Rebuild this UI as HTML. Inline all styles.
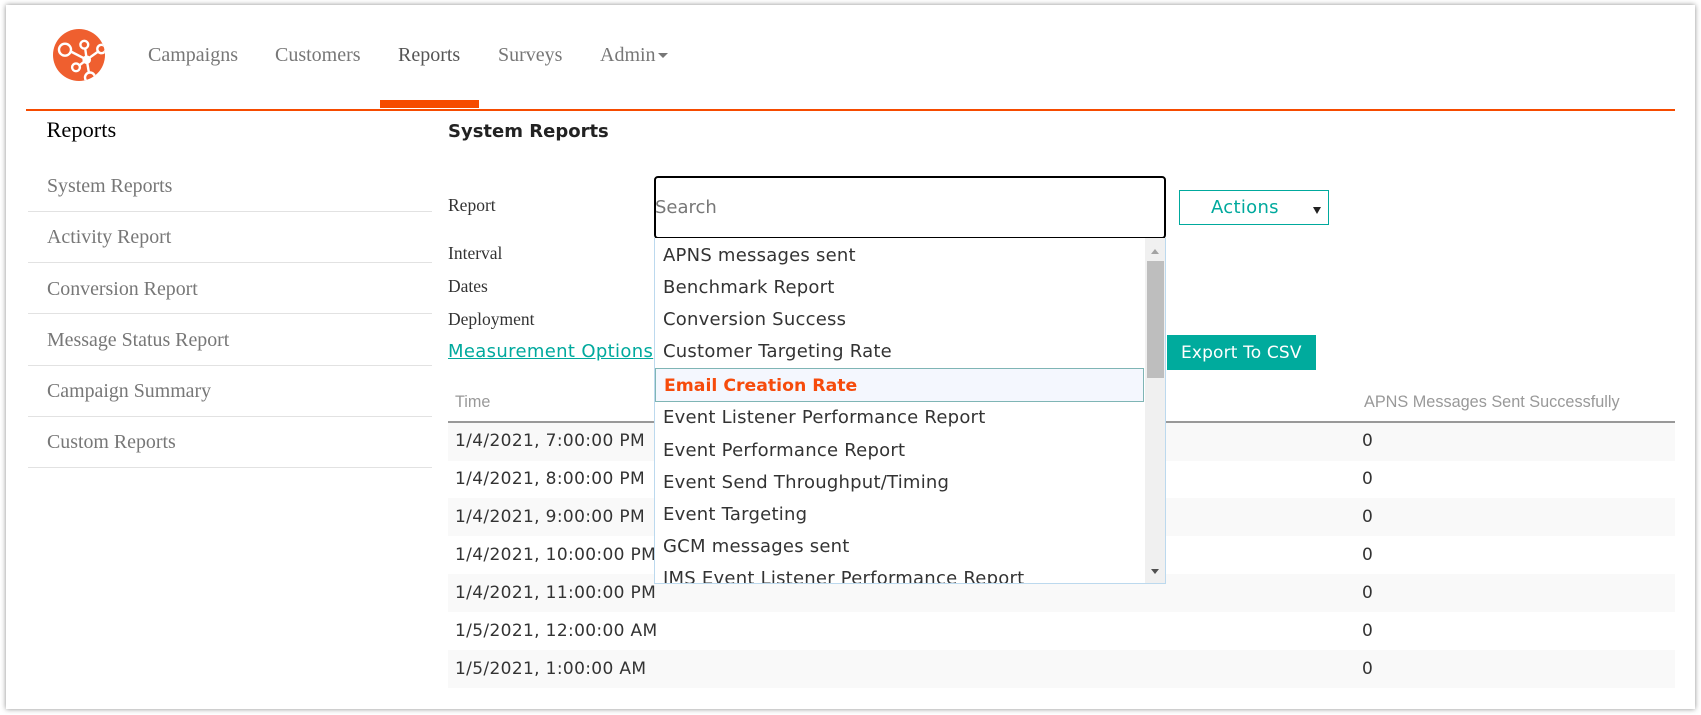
<!DOCTYPE html>
<html>
<head>
<meta charset="utf-8">
<title>Reports</title>
<style>
html,body{margin:0;padding:0;width:1701px;height:715px;overflow:hidden;background:#fff}
.card{position:absolute;left:6px;top:5px;width:1689px;height:704px;background:#fff;box-shadow:0 0 5px rgba(0,0,0,.45)}
.t{position:absolute;white-space:nowrap;height:30px;line-height:30px}
.s{font-family:"Liberation Serif",serif}
.d{font-family:"DejaVu Sans",sans-serif;font-size:18px;color:#333}
.a{font-family:"Liberation Sans",sans-serif}
.nav{font-size:20px;color:#777}
.side{font-size:19.9px;color:#777;left:47px}
.lab{font-size:17.5px;color:#333;left:448px}
.ln{position:absolute;left:28px;width:404px;height:1px;background:#e2e2e2}
.stripe{position:absolute;left:448px;width:1227px;height:38px;background:#f9f9f9}
.c1{left:455px;font-size:17px;letter-spacing:.35px}
.c2{left:1362px;font-size:17px}
.box{position:absolute}
.dd .d{letter-spacing:.23px;left:8px}
</style>
</head>
<body>
<div class="card"></div>

<svg class="box" style="left:52px;top:28px" width="54" height="54" viewBox="52 28 54 54">
<defs><clipPath id="lc"><ellipse cx="79" cy="55" rx="26" ry="26"/></clipPath></defs>
<ellipse cx="79" cy="55" rx="26" ry="26" fill="#ef5f2f"/>
<g clip-path="url(#lc)" fill="none" stroke="#fff" stroke-width="2.4">
<path d="M70.8 51.5L86.7 59.7M85.2 48.5L86.7 59.7M79.5 65.3L86.7 59.7M97.5 52L86.7 59.7M88.8 72L86.7 59.7"/>
<circle cx="65" cy="49.7" r="6"/>
<circle cx="84.3" cy="44.7" r="3.9"/>
<circle cx="76" cy="67.3" r="3.9"/>
<circle cx="101.5" cy="49" r="4.2"/>
<circle cx="90" cy="77.5" r="5"/>
<circle cx="86.7" cy="59.7" r="4.3" fill="#fff" stroke="none"/>
</g>
</svg>

<div class="t s nav" style="left:148px;top:40px">Campaigns</div>
<div class="t s nav" style="left:275px;top:40px">Customers</div>
<div class="t s nav" style="left:398px;top:40px;color:#555">Reports</div>
<div class="t s nav" style="left:498px;top:40px">Surveys</div>
<div class="t s nav" style="left:600px;top:40px">Admin</div>
<div class="box" style="left:658px;top:53px;width:0;height:0;border-left:5px solid transparent;border-right:5px solid transparent;border-top:5.5px solid #777"></div>

<div class="box" style="left:380px;top:100px;width:99px;height:8px;background:#f64b00"></div>
<div class="box" style="left:26px;top:109px;width:1649px;height:2px;background:#f64b00"></div>

<div class="t s" style="left:46.5px;top:115px;font-size:22.4px;color:#000">Reports</div>
<div class="t s side" style="top:171px">System Reports</div>
<div class="ln" style="top:211px"></div>
<div class="t s side" style="top:222px">Activity Report</div>
<div class="ln" style="top:262px"></div>
<div class="t s side" style="top:274px">Conversion Report</div>
<div class="ln" style="top:313px"></div>
<div class="t s side" style="top:325px">Message Status Report</div>
<div class="ln" style="top:365px"></div>
<div class="t s side" style="top:376px">Campaign Summary</div>
<div class="ln" style="top:416px"></div>
<div class="t s side" style="top:427px">Custom Reports</div>
<div class="ln" style="top:467px"></div>

<div class="t d" style="left:448px;top:116.5px;color:#222;font-weight:bold;font-size:18px">System Reports</div>
<div class="t s lab" style="top:190px">Report</div>
<div class="t s lab" style="top:238px">Interval</div>
<div class="t s lab" style="top:271px">Dates</div>
<div class="t s lab" style="top:304px">Deployment</div>
<div class="t d" style="left:448px;top:337px;color:#00a99d;text-decoration:underline;letter-spacing:.34px">Measurement Options</div>

<div class="t a" style="left:455px;top:387px;font-size:16.2px;color:#999">Time</div>
<div class="t a" style="left:1364px;top:387px;font-size:16.25px;color:#999">APNS Messages Sent Successfully</div>
<div class="box" style="left:448px;top:421px;width:1227px;height:2px;background:#999"></div>
<div class="stripe" style="top:423px"></div>
<div class="stripe" style="top:498px"></div>
<div class="stripe" style="top:574px"></div>
<div class="stripe" style="top:650px"></div>

<div class="t d c1" style="top:426px">1/4/2021, 7:00:00 PM</div>
<div class="t d c1" style="top:464px">1/4/2021, 8:00:00 PM</div>
<div class="t d c1" style="top:502px">1/4/2021, 9:00:00 PM</div>
<div class="t d c1" style="top:540px">1/4/2021, 10:00:00 PM</div>
<div class="t d c1" style="top:578px">1/4/2021, 11:00:00 PM</div>
<div class="t d c1" style="top:616px">1/5/2021, 12:00:00 AM</div>
<div class="t d c1" style="top:654px">1/5/2021, 1:00:00 AM</div>
<div class="t d c2" style="top:426px">0</div>
<div class="t d c2" style="top:464px">0</div>
<div class="t d c2" style="top:502px">0</div>
<div class="t d c2" style="top:540px">0</div>
<div class="t d c2" style="top:578px">0</div>
<div class="t d c2" style="top:616px">0</div>
<div class="t d c2" style="top:654px">0</div>

<div class="box" style="left:654px;top:176px;width:508px;height:59px;border:2px solid #000;border-radius:4px;background:#fff"></div>
<div class="t d" style="left:655px;top:193px;color:#777">Search</div>

<div class="box" style="left:1179px;top:190px;width:148px;height:33px;border:1px solid #00a99d;background:#fff"></div>
<div class="t d" style="left:1211px;top:193px;color:#00a99d;letter-spacing:.3px">Actions</div>
<div class="box" style="left:1313px;top:207px;width:0;height:0;border-left:4px solid transparent;border-right:4px solid transparent;border-top:7px solid #222"></div>

<div class="box dd" style="left:654px;top:238px;width:510px;height:345px;border:1px solid #bcd9ee;border-top:0;background:#fff;overflow:hidden">
  <div class="t d" style="top:3px">APNS messages sent</div>
  <div class="t d" style="top:35px">Benchmark Report</div>
  <div class="t d" style="top:67px">Conversion Success</div>
  <div class="t d" style="top:99px">Customer Targeting Rate</div>
  <div class="box" style="left:0;top:130px;width:487px;height:32px;border:1px solid #7fb5b5;background:#f4f7fe"></div>
  <div class="t d" style="left:9px;top:133px;color:#f64b0c;font-weight:bold;font-size:17.3px;letter-spacing:0">Email Creation Rate</div>
  <div class="t d" style="top:165px">Event Listener Performance Report</div>
  <div class="t d" style="top:198px">Event Performance Report</div>
  <div class="t d" style="top:230px">Event Send Throughput/Timing</div>
  <div class="t d" style="top:262px">Event Targeting</div>
  <div class="t d" style="top:294px">GCM messages sent</div>
  <div class="t d" style="top:326px">IMS Event Listener Performance Report</div>
  <div class="box" style="left:490px;top:0;width:20px;height:345px;background:#f0f0f0"></div>
  <div class="box" style="left:492px;top:23px;width:17px;height:117px;background:#bebebe"></div>
  <div class="box" style="left:496px;top:11px;width:0;height:0;border-left:4.5px solid transparent;border-right:4.5px solid transparent;border-bottom:5px solid #a3a3a3"></div>
  <div class="box" style="left:496px;top:331px;width:0;height:0;border-left:4.5px solid transparent;border-right:4.5px solid transparent;border-top:5px solid #505050"></div>
</div>

<div class="box" style="left:1167px;top:335px;width:149px;height:35px;background:#00ab9d"></div>
<div class="t d" style="left:1181px;top:338px;color:#fff;font-size:17px;letter-spacing:.15px">Export To CSV</div>
</body>
</html>
